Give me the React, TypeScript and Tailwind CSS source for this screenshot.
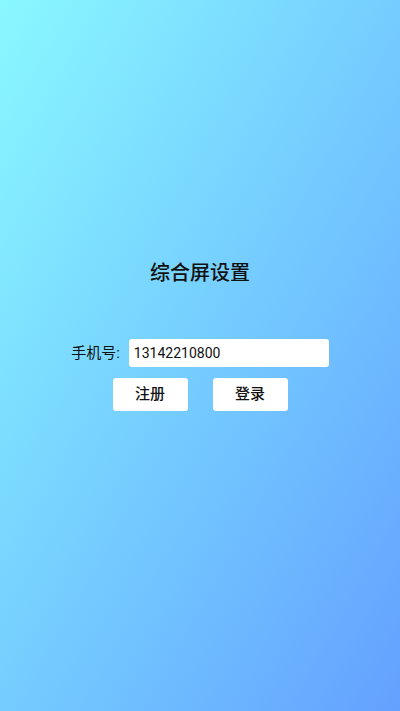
import React, { useState } from 'react'

const App = () => {
  const [phone, setPhone] = useState('13142210800')

  return (
    <div
      className="flex h-[711px] w-full flex-col items-center bg-gradient-to-br from-[#8af8ff] to-[#64a0ff] text-[#111]"
      style={{ fontFamily: 'Roboto, "Noto Sans CJK SC", sans-serif' }}
    >
      <p className="mt-[259px] h-[28px] text-[20px] font-medium leading-[28px]">综合屏设置</p>
      <div className="mt-[52px] flex items-center gap-[9px]">
        <span className="text-[15px] leading-[20px]">手机号:</span>
        <input
          value={phone}
          onChange={(e) => setPhone(e.target.value)}
          className="h-[28px] w-[200px] rounded-[3px] bg-white px-[5px] text-[14px] outline-none"
        />
      </div>
      <div className="mt-[11px] flex gap-[25px]">
        <button className="h-[33px] w-[75px] rounded-[3px] bg-white text-[15px] font-medium">注册</button>
        <button className="h-[33px] w-[75px] rounded-[3px] bg-white text-[15px] font-medium">登录</button>
      </div>
    </div>
  )
}

export default App
